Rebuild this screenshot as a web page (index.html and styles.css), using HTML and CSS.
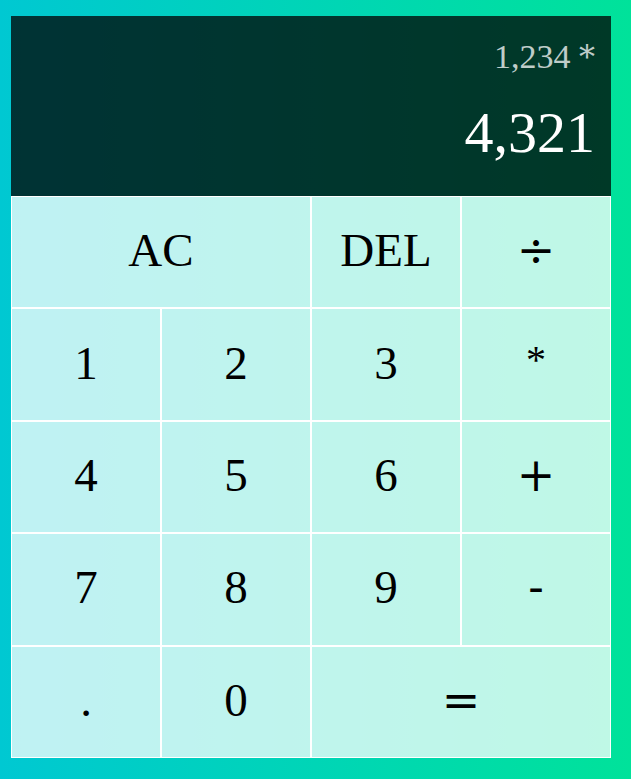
FILE: index.html
```html
<!DOCTYPE html>
<html lang="en">
<head>
<meta charset="utf-8">
<title>Calculator</title>
<link rel="stylesheet" href="styles.css">
</head>
<body>
<div class="calculator-grid">
  <div class="output">
    <div class="previous-operand">1,234 <span class="op-glyph">*</span></div>
    <div class="current-operand">4,321</div>
  </div>
  <button class="key span-two">AC</button>
  <button class="key">DEL</button>
  <button class="key op">÷</button>
  <button class="key">1</button>
  <button class="key">2</button>
  <button class="key">3</button>
  <button class="key star">*</button>
  <button class="key">4</button>
  <button class="key">5</button>
  <button class="key">6</button>
  <button class="key op">+</button>
  <button class="key">7</button>
  <button class="key">8</button>
  <button class="key">9</button>
  <button class="key op">-</button>
  <button class="key">.</button>
  <button class="key">0</button>
  <button class="key op span-two">=</button>
</div>
</body>
</html>
```
FILE: styles.css
```css
*, *::before, *::after {
  box-sizing: border-box;
}

html, body {
  margin: 0;
  padding: 0;
}

body {
  min-height: 779px;
  background: linear-gradient(to right, #00c8d2, #00e29a);
  font-family: "Liberation Serif", "Times New Roman", serif;
}

.calculator-grid {
  display: grid;
  grid-template-columns: repeat(4, 150px);
  grid-template-rows: 180px repeat(5, 112.4px);
  padding: 16px 0 0 11px;
}

.key {
  margin: 0;
  padding: 0 0 4px 0;
  font-family: "Liberation Serif", "Times New Roman", serif;
  font-size: 47px;
  color: #000;
  border: 1px solid #fff;
  outline: none;
  background-color: rgba(255, 255, 255, 0.75);
  cursor: pointer;
}

.key.op {
  font-family: "DejaVu Serif", serif;
  font-size: 46px;
}

.key.star {
  font-size: 40px;
  padding-bottom: 10px;
}

.span-two {
  grid-column: span 2;
}

.output {
  grid-column: 1 / -1;
  background-color: rgba(0, 0, 0, 0.75);
  display: flex;
  flex-direction: column;
  align-items: flex-end;
  justify-content: space-around;
  padding: 11px 16px 19px 15px;
  word-wrap: break-word;
  word-break: break-all;
}

.previous-operand {
  color: rgba(255, 255, 255, 0.75);
  font-size: 34px;
}

.op-glyph {
  font-family: "DejaVu Serif", serif;
  font-size: 32px;
}

.current-operand {
  color: #fff;
  font-size: 58px;
}
```
